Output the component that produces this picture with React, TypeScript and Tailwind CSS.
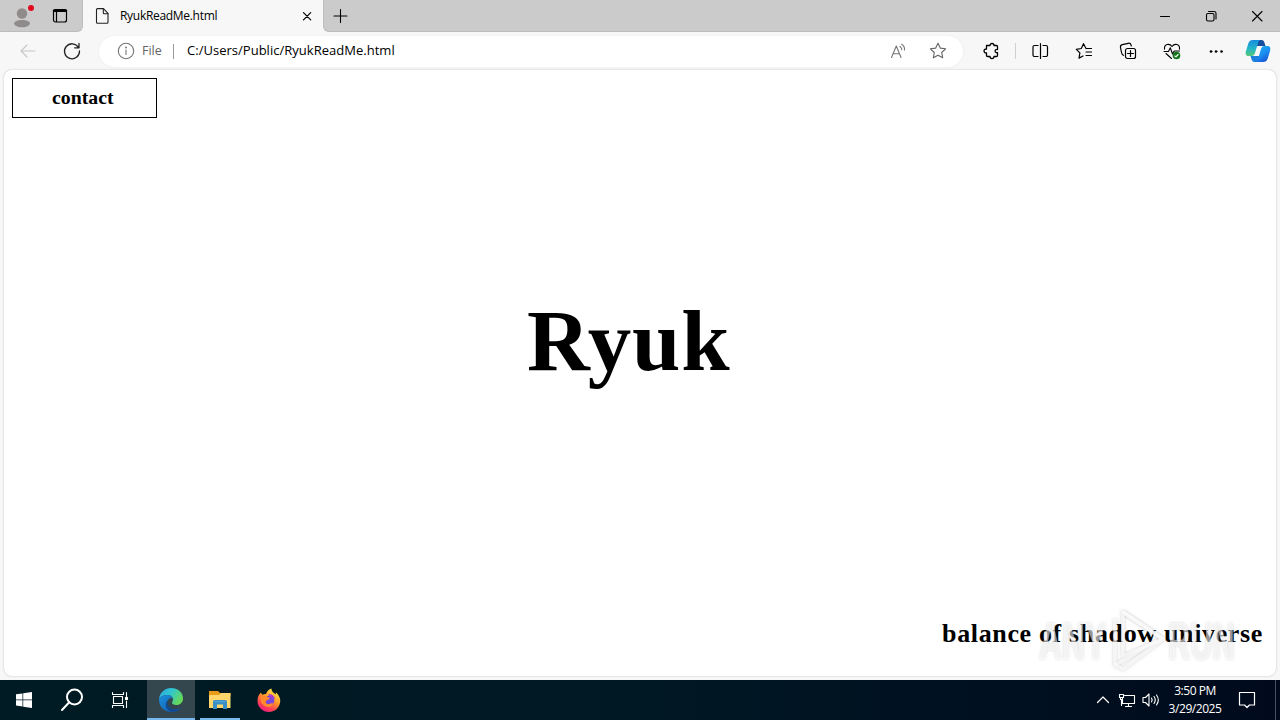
import type { ReactNode } from "react";

const UI_FONT = "font-['Open_Sans','Noto_Sans',sans-serif]";
const SERIF = "font-['Liberation_Serif',serif]";

type IconProps = { children: ReactNode; size?: number; className?: string; sw?: number };

function Icon({ children, size = 20, className = "", sw = 1.1 }: IconProps) {
  return (
    <svg
      width={size}
      height={size}
      viewBox={`0 0 ${size} ${size}`}
      fill="none"
      stroke="currentColor"
      strokeWidth={sw}
      strokeLinecap="round"
      strokeLinejoin="round"
      className={`shrink-0 ${className}`}
      aria-hidden="true"
    >
      {children}
    </svg>
  );
}

const STAR = "M10 2.3l2.3 4.8 5.3.7-3.9 3.7 1 5.3L10 14.2l-4.7 2.6 1-5.3-3.9-3.7 5.3-.7z";

function TabStrip() {
  return (
    <div className="flex h-8 shrink-0 bg-[#f7f7f7]">
      <div className="flex h-8 w-[83px] shrink-0 items-center rounded-br-md border-r border-b border-[#bdbdbd] bg-[#cbcbcb] pl-2.5">
        <svg width="28" height="28" viewBox="0 0 28 28" className="shrink-0" aria-hidden="true">
          <circle cx="12" cy="11.5" r="5.2" fill="#8f8b8b" />
          <path d="M4 22c0-3 4-4 8-4s8 1 8 4c-1.500 2.500-4.500 3.300-8 3.300s-6.500-.8-8-3.300z" fill="#8f8b8b" />
          <circle cx="21" cy="6" r="3" fill="#e00b1c" />
        </svg>
        <Icon className="ml-3 text-black" sw={1.2}>
          <rect x="3.500" y="3.500" width="13" height="12.500" rx="2" />
          <path d="M4 4.800h12" strokeWidth="2.500" />
          <path d="M6.500 6v9.500" />
        </Icon>
      </div>
      <div className="flex h-8 w-[240px] shrink-0 items-center pl-2.5">
        <Icon className="text-[#222]" sw={1.1}>
          <path d="M4.500 2.600h6l4.500 4.700v8.900a1 1 0 0 1-1 1H4.500a1 1 0 0 1-1-1V3.600a1 1 0 0 1 1-1z" />
          <path d="M10.300 2.800v4a1 1 0 0 0 1 1h3.600" />
        </Icon>
        <span className="ml-[7px] w-[177px] text-[12px] tracking-[-0.300px] text-black">RyukReadMe.html</span>
        <Icon size={20} className="text-black" sw={1.2}>
          <path d="M6.500 6.700l7.200 7.200M13.700 6.700l-7.200 7.200" />
        </Icon>
      </div>
      <div className="flex h-8 grow items-center rounded-bl-md border-b border-l border-[#bdbdbd] bg-[#cbcbcb]">
        <Icon size={20} className="ml-[6px] text-black" sw={1.1}>
          <path d="M10.500 3.500v13M4 10h13" />
        </Icon>
        <div className="ml-auto flex items-center">
          <div className="flex w-[46px] justify-center">
            <Icon sw={1}><path d="M5.500 10.500h9" /></Icon>
          </div>
          <div className="flex w-[46px] justify-center">
            <Icon sw={1.1}>
              <rect x="5.500" y="7.500" width="7.500" height="7.500" rx="1.500" />
              <path d="M7.500 5.500h5.500a2 2 0 0 1 2 2v5.500" />
            </Icon>
          </div>
          <div className="flex w-[46px] justify-center">
            <Icon sw={1.1}><path d="M5.500 5.500l9.500 9.500M15 5.500L5.500 15" /></Icon>
          </div>
        </div>
      </div>
    </div>
  );
}

function AddressBar() {
  return (
    <div className="flex h-[31px] w-[864px] items-center rounded-full bg-white pl-[17px] pr-[15px] shadow-[0_0_2px_#e6e6e6]">
      <Icon className="text-[#767676]">
        <circle cx="10" cy="10" r="7.700" />
        <path d="M10 9v4.500" />
        <circle cx="10" cy="6.500" r=".4" fill="currentColor" />
      </Icon>
      <span className="ml-[6px] w-[31px] text-[12.5px] text-[#666]">File</span>
      <span className="h-[15px] w-px bg-[#999]" />
      <span className="ml-[13px] text-[13px] tracking-[0.02px] text-black">C:/Users/Public/RyukReadMe.html</span>
      <Icon className="ml-auto text-[#767676]">
        <path d="M3.500 16.500L8.300 5 13 16.500M5.200 12.700h6.200" />
        <path d="M12 5.500c1.300.9 1.800 1.900 1.800 3.300M13.700 3.200c2.200 1.300 3 3.200 2.800 5.800" />
      </Icon>
      <Icon className="ml-5 text-[#666]">
        <path d={STAR} />
      </Icon>
    </div>
  );
}

function CopilotLogo() {
  return (
    <svg width="26" height="24" viewBox="0 0 26 24" aria-hidden="true">
      <defs>
        <linearGradient id="cpA" x1="0" y1="0" x2="0" y2="1">
          <stop stopColor="#168cdd" />
          <stop offset=".55" stopColor="#25b6c8" />
          <stop offset="1" stopColor="#54c878" />
        </linearGradient>
        <linearGradient id="cpB" x1="0" y1="0" x2=".6" y2="1">
          <stop stopColor="#16b4f0" />
          <stop offset=".6" stopColor="#1c8df0" />
          <stop offset="1" stopColor="#1757d8" />
        </linearGradient>
      </defs>
      <path d="M10 1h6.500c2 0 2.600 1.500 3.200 3.500l.8 2.500H11z" fill="#164d9c" />
      <path d="M16 23H9.500c-2 0-2.600-1.500-3.200-3.500L5.500 17H15z" fill="#1c7fdc" />
      <path d="M8 1h7.500c-1.500.5-2 1.500-2.600 3.500L10 14c-.7 2-1.500 3-3.500 3H3.500C.5 17 .3 14.500 1 12l2.300-7.500C4.100 2 5.500 1 8 1z" fill="url(#cpA)" />
      <path d="M18 23h-7.500c1.500-.5 2-1.500 2.600-3.500L16 10c.7-2 1.500-3 3.500-3h3c3 0 3.200 2.500 2.500 5l-2.300 7.500C21.900 22 20.500 23 18 23z" fill="url(#cpB)" />
      <path d="M12.700 7h4.100c-.7.700-1.100 1.600-1.400 2.600L13.300 17H9.200c.6-.8.900-1.500 1.200-2.500z" fill="#f7f7f7" />
    </svg>
  );
}

const TOOLS: ReactNode[] = [
  <Icon key="split" sw={1.2} className="-ml-px">
    <path d="M8 4.500H4.500A1.500 1.500 0 0 0 3 6v8a1.500 1.500 0 0 0 1.500 1.500H8M13 4.500h3A1.500 1.500 0 0 1 17.500 6v8a1.500 1.500 0 0 1-1.500 1.500h-3M10.500 2.500v15" />
  </Icon>,
  <Icon key="favorites" sw={1.2}>
    <path d="M12 7.500L9.500 2.700 7.300 7.500l-5 .8 3.600 3.600-.9 5.200 4-2.100M12 7.500h5.500M12 11h5.500M12 14.500h5.500" />
  </Icon>,
  <Icon key="collections" sw={1.2}>
    <path d="M5.500 14.300c-1.200-.4-1.700-1.300-2-2.800l-1-5c-.3-1.600.3-2.600 1.800-2.900l6-1.300c1.500-.3 2.400.3 2.800 1.800l.2.900" />
    <rect x="7.500" y="7.500" width="10" height="10" rx="2" />
    <path d="M12.500 9.500v6M9.500 12.500h6" />
  </Icon>,
  <Icon key="essentials" sw={1.1}>
    <path d="M2.500 8.200C2 3.200 7.300 1.800 10 5.500c2.700-3.700 8-2.300 7.500 2.700M2 10.500h4.500l1.800-3.800 2.200 6.300 1.700-3h5.300M4 12.500l5.500 5" />
    <circle cx="14.500" cy="14.500" r="3.800" fill="#12751b" stroke="none" />
    <path d="M12.900 15l1 .8 2.200-2.300" stroke="#fff" />
  </Icon>,
  <Icon key="more" sw={0.5}>
    <g fill="currentColor">
      <circle cx="5" cy="10.500" r="1.100" /><circle cx="10" cy="10.500" r="1.100" /><circle cx="15.500" cy="10.500" r="1.100" />
    </g>
  </Icon>,
];

function Toolbar() {
  return (
    <div className="flex h-[38px] shrink-0 items-center bg-[#f7f7f7] pl-[18px] text-black">
      <Icon className="text-[#c6c6c6]">
        <path d="M17 10H3M9 4l-6 6 6 6" />
      </Icon>
      <Icon className="ml-6 mr-[17px] text-[#222]" sw={1.3}>
        <path d="M16.500 6.500A7.500 7.500 0 1 0 17.500 10M17 2.500v4.300h-4.300" />
      </Icon>
      <AddressBar />
      <Icon className="ml-[18px]" sw={1.3}>
        <path d="M5.500 4.500H9c0-2.700 4-2.700 4 0h2.500a1 1 0 0 1 1 1V8.500c-3.200-.6-3.200 3.700 0 3.200v2.800a1 1 0 0 1-1 1H13c0 2.700-4 2.700-4 0H6.500a1 1 0 0 1-1-1V12c-3.300.3-3.300-4.200 0-4z" />
      </Icon>
      <span className="ml-[14px] h-4 w-px bg-[#d0d0d0]" />
      <div className="ml-[2px] flex">
        {TOOLS.map((tool, i) => (
          <div key={i} className="flex w-11 justify-center">{tool}</div>
        ))}
      </div>
      <div className="ml-[7px]"><CopilotLogo /></div>
    </div>
  );
}

function Watermark() {
  return (
    <svg
      className="absolute right-9 bottom-0 overflow-visible"
      width="208"
      height="72"
      viewBox="0 0 208 72"
      aria-hidden="true"
    >
      <defs>
        <filter id="soft" x="-10%" y="-10%" width="120%" height="120%">
          <feDropShadow dx="0" dy="0" stdDeviation="1.6" floodColor="#777" floodOpacity=".6" />
        </filter>
      </defs>
      <g filter="url(#soft)" fill="#fff" fillOpacity=".5" fontSize="53" fontFamily="Liberation Sans, sans-serif" fontWeight="700">
        <text transform="translate(7 55) scale(.6 .98)">ANY</text>
        <text transform="translate(136 55) scale(.58 .98)">RUN</text>
      </g>
      <g filter="url(#soft)" fill="none" stroke="#fff" strokeWidth="3.500" strokeOpacity=".6" strokeLinejoin="round">
        <path d="M91 8v44l40-17z" />
        <path d="M91 8l40 27-40 30-8-4V15" />
        <path d="M83 61l41-24" />
      </g>
    </svg>
  );
}

function Page() {
  return (
    <div className="flex grow bg-[#f7f7f7] px-1 pb-1">
      <main className={`relative flex grow flex-col rounded-lg bg-white pt-2 pl-2 text-black shadow-[0_0_2px_#bbb] ${SERIF}`}>
        <div className="flex h-10 w-[145px] items-center border border-black pl-[39px] text-[19.800px] font-bold">
          contact
        </div>
        <h1 className="mt-[173px] ml-[515px] text-[87px] leading-[100px] font-bold tracking-[0.900px]">Ryuk</h1>
        <h2 className="mt-auto mr-[13px] mb-[27px] text-right text-[26px] leading-[30px] font-bold tracking-[0.650px]">
          balance of shadow universe
        </h2>
        <Watermark />
      </main>
    </div>
  );
}

function EdgeLogo() {
  return (
    <svg width="26" height="26" viewBox="0 0 26 26" aria-hidden="true">
      <defs>
        <linearGradient id="edTop" x1="0" y1="0" x2="1" y2=".5">
          <stop stopColor="#2aa5e8" />
          <stop offset=".5" stopColor="#31c6cf" />
          <stop offset="1" stopColor="#65d95b" />
        </linearGradient>
        <linearGradient id="edLow" x1="0" y1="0" x2="1" y2="1">
          <stop stopColor="#1991df" />
          <stop offset="1" stopColor="#1355a5" />
        </linearGradient>
      </defs>
      <path d="M1 12C2 5 7 1 13 1c7 0 12 4.500 12 10.500 0 4-3 6.500-6.500 6.500-3 0-4.500-1-4.500-2.200 0-1 1-1.300 1-3.300 0-2.500-2.500-4.500-5.500-4.500C5.500 8 2.500 9.500 1 12z" fill="url(#edTop)" />
      <path d="M1 12c1.500-2.500 5-4 8.500-4 3 0 5 1.500 5.400 3.400C13.500 10 9 11.500 9 16c0 4 4 7 9 6.500 2-.2 4-1.300 5-2C21 23.500 17.500 25 14 25 6 25 1 20 1 12z" fill="url(#edLow)" />
      <path d="M9.500 13.500C8.500 19 13 23 18 22.500c2-.2 4-1.300 5-2-2 3-5.500 4.500-9 4.500-5.500-1-8.500-7.500-4.500-11.500z" fill="#124a91" />
    </svg>
  );
}

function FolderLogo() {
  return (
    <svg width="24" height="22" viewBox="0 0 24 22" aria-hidden="true">
      <path d="M1 3h9l2 2h10.500v3H1z" fill="#e89b18" />
      <path d="M1 7h10l2-2h9.500v15H1z" fill="#ffd66b" />
      <path d="M5 21v-8l1.500-1h11l1.500 1v8h-4v-4.500H9V21z" fill="#3b8fc4" />
      <path d="M7 13.500h10" stroke="#51a5d8" />
    </svg>
  );
}

function FirefoxLogo() {
  return (
    <svg width="24" height="25" viewBox="0 0 24 25" aria-hidden="true">
      <defs>
        <linearGradient id="ff" x1=".8" y1="0" x2=".25" y2="1">
          <stop stopColor="#fff04c" />
          <stop offset=".45" stopColor="#ff9829" />
          <stop offset=".75" stopColor="#ff4055" />
          <stop offset="1" stopColor="#ed1784" />
        </linearGradient>
      </defs>
      <path d="M4 4.500c.3 1 .8 1.700 1.500 2.300C7 6 8 6 9 6.300 9.700 3.500 12 1 14.500.5c0 3.500 2.500 4 4 6 .5-.7.400-1.500.2-2.300C22 7 24 11 23 15c-1 5-5.500 9-11 9C5.500 24 .5 19 .5 13c0-3.500 1-6.500 3.500-8.500z" fill="url(#ff)" />
      <circle cx="12.500" cy="12.500" r="4.800" fill="#7947dd" />
      <path d="M3.500 9.500c3-2 5-2 7.500-.3l2 .8c-.5 1.500-2.300 1.700-3.500 2.500-1.500 1-.7 4 2.500 3.500 2-.3 3-1 4-.5-1 3-4 4-7 3-4-1.300-6-5-5.500-9z" fill="#ff8a2b" />
      <path d="M11 6.500c3-1 6.500 1 7 4.500-1.500-1.500-3-1.500-4-1z" fill="#a33bd0" />
    </svg>
  );
}

function Taskbar() {
  return (
    <footer className="flex h-10 shrink-0 items-center bg-linear-to-r from-[#001b23] via-[#001824] to-[#000a1c] text-white">
      <div className="flex w-12 justify-center">
        <svg width="16" height="16" viewBox="0 0 16 16" fill="#fff" aria-hidden="true">
          <path d="M0 2.300l6.500-.9v6.200H0zM7.200 1.300L16 0v7.600H7.200zM0 8.300h6.500v6.200L0 13.600zM7.200 8.300H16V16l-8.800-1.300z" />
        </svg>
      </div>
      <div className="flex w-12 justify-center">
        <Icon size={24} sw={2}>
          <circle cx="14.500" cy="9" r="7.500" /><path d="M9 14.500L2 22" />
        </Icon>
      </div>
      <div className="flex w-[51px] justify-center">
        <Icon size={20} sw={1.1} className="mr-[3px]">
          <path d="M3.500 6.500h9v7h-9zM2.500 2.500v2h11v-2M2.500 17.500v-2h11v2M16.500 2.500v4M16.500 11v6.500" />
          <path d="M15.500 7.500h2v2h-2z" fill="currentColor" />
        </Icon>
      </div>
      <div className="flex h-10 w-12 items-center justify-center border-b-2 border-[#76b9ed] bg-[#34474f] pt-0.5"><EdgeLogo /></div>
      <div className="ml-[5px] flex h-10 w-10 items-center justify-center border-b-2 border-[#76b9ed]"><FolderLogo /></div>
      <div className="ml-[5px] flex w-12 justify-center"><FirefoxLogo /></div>
      <div className="ml-auto flex h-10 items-center">
        <Icon size={20} sw={1.2}><path d="M4.500 12.500L10 7l5.500 5.500" /></Icon>
        <Icon size={20} sw={1.1} className="ml-1">
          <path d="M7.500 5.500h10v8h-12v-4M11.500 13.500v3M8.500 16.500h6" />
          <path d="M2.500 4.500h4v3h-4zM3.500 7.500v2h2v-2M4.500 9.500v6" />
        </Icon>
        <Icon size={20} sw={1.1} className="ml-1">
          <path d="M2 7.500h2.500L8 4v12l-3.500-3.500H2zM10.500 8.200a3 3 0 0 1 0 3.600M13 6.500a6 6 0 0 1 0 7M15.500 5a8.500 8.500 0 0 1 0 10" />
        </Icon>
        <div className="ml-1 flex w-[60px] flex-col text-center text-[12px] leading-[18px] tracking-[-0.450px] whitespace-nowrap">
          <span>3:50 PM</span>
          <span>3/29/2025</span>
        </div>
        <Icon size={20} sw={1.2} className="ml-3 mr-[18px]">
          <path d="M2.500 2.500h15v12.500h-5L10 17.500 7.500 15h-5z" />
        </Icon>
        <span className="mr-1 h-10 w-px bg-[#435060]" />
      </div>
    </footer>
  );
}

export default function App() {
  return (
    <div className={`flex h-[720px] w-[1280px] flex-col overflow-hidden ${UI_FONT}`}>
      <TabStrip />
      <Toolbar />
      <Page />
      <Taskbar />
    </div>
  );
}
